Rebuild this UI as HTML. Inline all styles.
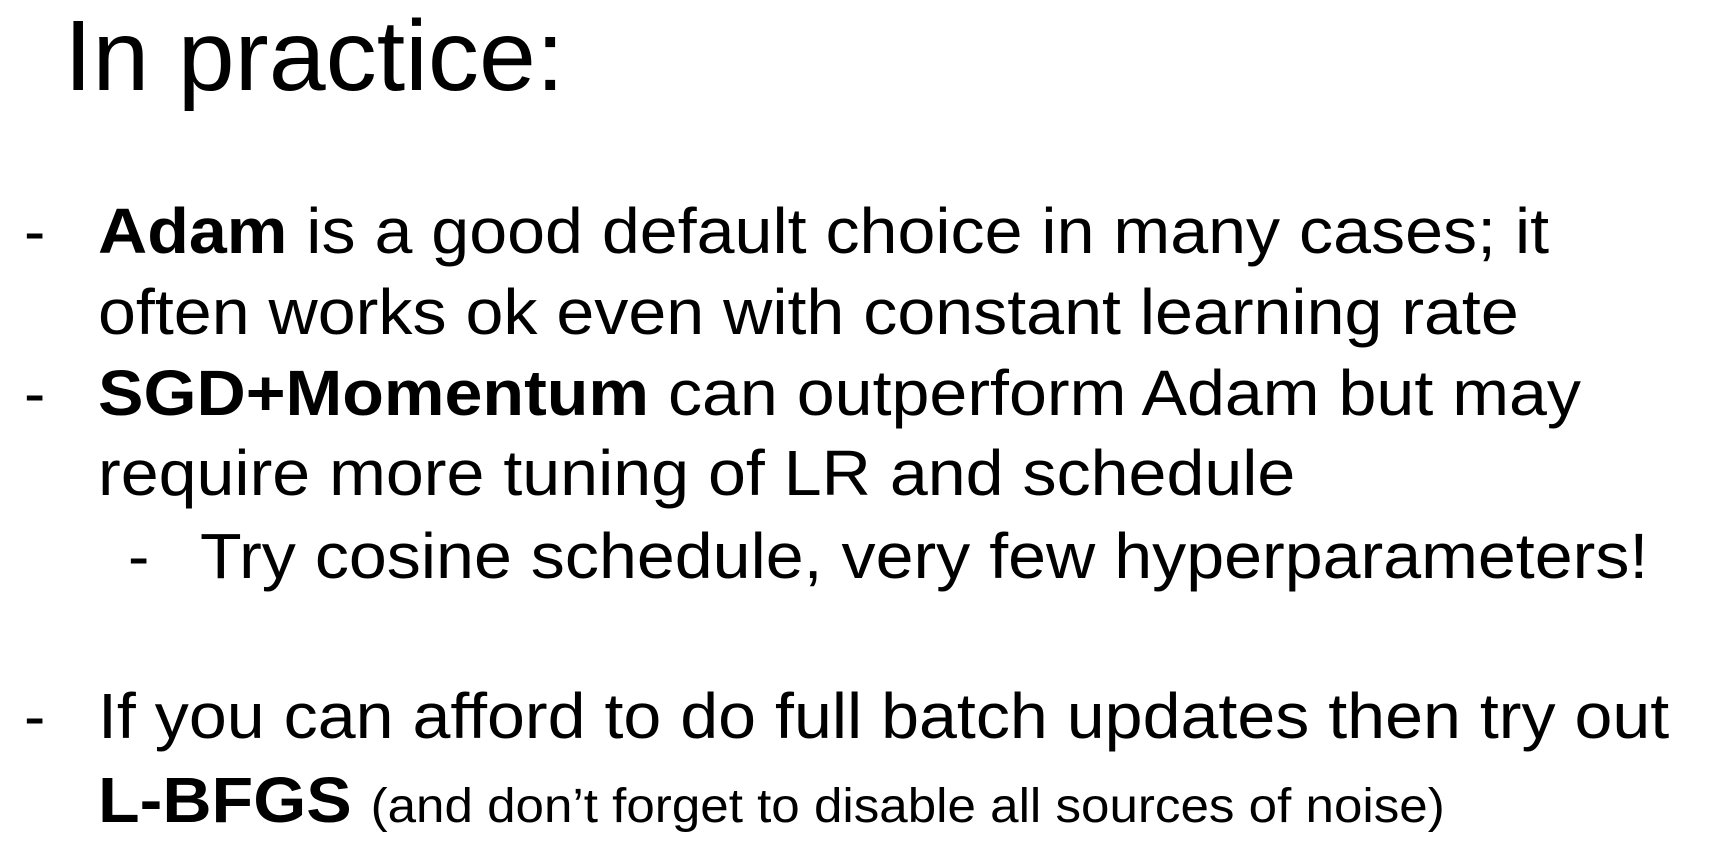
<!DOCTYPE html>
<html><head><meta charset="utf-8"><style>
html,body{margin:0;padding:0;background:#fff;}
body{width:1728px;height:868px;position:relative;overflow:hidden;font-family:"Liberation Sans",Arial,sans-serif;color:#000;}
.l{position:absolute;white-space:nowrap;line-height:1;font-size:64px;}
.s{transform:scaleX(1.065);transform-origin:0 0;}
b{font-weight:bold;}
</style></head><body>
<div class="l" style="left:64px;top:6px;font-size:100px;transform:scaleX(1.023);transform-origin:0 0;">In practice:</div>
<div class="l" style="left:24px;top:199px;">-</div>
<div class="l s" style="left:98px;top:199px;"><b>Adam</b> is a good default choice in many cases; it</div>
<div class="l s" style="left:98px;top:280px;">often works ok even with constant learning rate</div>
<div class="l" style="left:24px;top:361px;">-</div>
<div class="l s" style="left:98px;top:361px;"><b>SGD+Momentum</b> can outperform Adam but may</div>
<div class="l s" style="left:98px;top:441px;">require more tuning of LR and schedule</div>
<div class="l" style="left:128px;top:524px;">-</div>
<div class="l s" style="left:200px;top:524px;">Try cosine schedule, very few hyperparameters!</div>
<div class="l" style="left:24px;top:684px;">-</div>
<div class="l s" style="left:98px;top:684px;">If you can afford to do full batch updates then try out</div>
<div class="l s" style="left:98px;top:768px;"><b>L-BFGS</b> <span style="font-size:48px;">(and don’t forget to disable all sources of noise)</span></div>
</body></html>
